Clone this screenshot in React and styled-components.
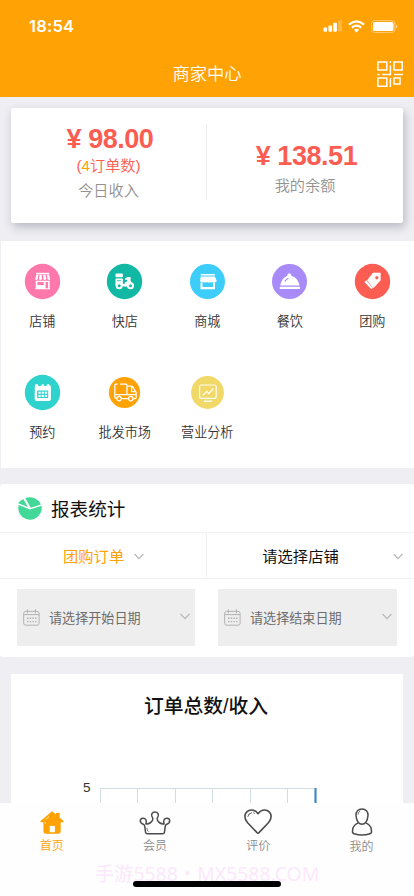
import React from "react";
import styled, { createGlobalStyle } from "styled-components";

const Global = createGlobalStyle`
  * { box-sizing: border-box; }
  body {
    margin: 0;
    background: #eeeef3;
    font-family: "Liberation Sans", "Noto Sans CJK SC", sans-serif;
    overflow: hidden;
  }
  svg { display: block; flex: none; }
`;

const Screen = styled.div`
  width: 414px;
  height: 896px;
  display: flex;
  flex-direction: column;
  background: #eeeef3;
  overflow: hidden;
`;

const Header = styled.header`
  height: 97px;
  flex: none;
  background: #ffa206;
  color: #fff;
`;

const StatusBar = styled.div`
  height: 52px;
  padding: 0 16px 0 29px;
  display: flex;
  align-items: center;
  justify-content: space-between;
`;

const Time = styled.span`
  font: 600 16.5px/20px Inter, sans-serif;
  letter-spacing: 0.2px;
`;

const StatusIcons = styled.div`
  display: flex;
  align-items: center;
  gap: 6px;
`;

const TitleBar = styled.div`
  height: 43px;
  display: grid;
  grid-template-columns: 1fr auto 1fr;
  align-items: center;
  padding: 0 11px;
  & > svg { grid-column: 3; justify-self: end; }
`;

const PageTitle = styled.h1`
  grid-column: 2;
  margin: 0;
  font-weight: 350;
  font-size: 17.3px;
  line-height: 24px;
`;

const Main = styled.main`
  flex: 1;
  min-height: 0;
  overflow: hidden;
`;

const IncomeCard = styled.section`
  height: 115px;
  margin: 11px 11px 0 11px;
  border-radius: 2px;
  background: #fff;
  box-shadow: 2px 4px 10px rgba(60, 60, 80, 0.3);
  display: grid;
  grid-template-columns: 195px 1px 1fr;
`;

const CardDivider = styled.div`
  height: 76px;
  margin-top: 16px;
  background: #ededf0;
`;

const Figure = styled.div`
  display: flex;
  flex-direction: column;
  align-items: center;
  padding-top: ${(p) => p.$top}px;
`;

const Amount = styled.div`
  display: flex;
  gap: 7px;
  padding-left: 3px;
  color: #fb5d52;
  font-size: 27px;
  font-weight: 700;
  line-height: 30px;
  letter-spacing: -0.45px;
`;

const OrderCount = styled.div`
  color: #fb5d52;
  font-size: 15.2px;
  font-weight: 350;
  line-height: 24px;
  b { color: #ffa206; font-weight: 400; }
`;

const FigureLabel = styled.div`
  margin-top: ${(p) => p.$gap}px;
  color: #929292;
  font-size: 15.2px;
  font-weight: 350;
  line-height: 24px;
`;

const Services = styled.section`
  height: 227px;
  margin: 18px 0 0 1px;
  background: #fff;
  display: grid;
  grid-template-columns: repeat(5, 82.5px);
  grid-template-rows: 111px 111px;
`;

const Service = styled.div`
  display: flex;
  flex-direction: column;
  align-items: center;
  padding-top: 22px;
`;

const ServiceLabel = styled.span`
  margin-top: 12px;
  color: #333;
  font-size: 13.1px;
  font-weight: 350;
  line-height: 20px;
`;

const Report = styled.section`
  height: 173px;
  margin-top: 16px;
  border-radius: 3px;
  background: #fff;
`;

const ReportHeading = styled.div`
  height: 48px;
  padding: 2px 0 0 18px;
  display: flex;
  align-items: center;
  gap: 9px;
  font-size: 18.6px;
  line-height: 26px;
  color: #111;
  & > span { padding-top: 2px; }
`;

const FilterRow = styled.div`
  height: 47px;
  display: grid;
  grid-template-columns: 207px 1fr;
  border: solid #f1f1f1;
  border-width: 1px 0;
`;

const OrderFilter = styled.div`
  display: flex;
  align-items: center;
  gap: 10px;
  padding-left: 63px;
  border-right: 1px solid #f0f0f0;
  color: #ffa206;
  font-size: 15.3px;
  & > span { padding-bottom: 2px; }
  & > svg { margin-top: 2px; }
`;

const ShopFilter = styled.div`
  display: grid;
  grid-template-columns: 1fr 10px;
  align-items: center;
  padding: 0 11px 0 1px;
  color: #111;
  font-size: 15.3px;
  text-align: center;
  & > span { padding-bottom: 2px; }
  & > svg { margin-top: 2px; }
`;

const DateRow = styled.div`
  display: grid;
  grid-template-columns: 178px 179px;
  gap: 23px;
  padding: 10px 17px 0;
`;

const DateField = styled.div`
  height: 57px;
  padding: 0 5px 0 6px;
  display: flex;
  align-items: center;
  background: #eee;
  color: #6c6c6c;
  font-size: 13.1px;
  line-height: 20px;
  & > span { flex: 1; margin-left: 9px; padding-top: 2px; }
  & > svg:last-child { margin-bottom: 2px; }
`;

const ChartCard = styled.section`
  height: 300px;
  margin: 17px 11px 0;
  background: #fff;
`;

const ChartTitle = styled.h2`
  margin: 0;
  padding: 18px 2px 0 0;
  height: 107px;
  color: #111;
  text-align: center;
  font-family: "Liberation Sans", "Noto Sans CJK SC", sans-serif;
  font-size: 19.8px;
  font-weight: 500;
  line-height: 28px;
`;

const ChartBody = styled.div`
  display: flex;
  padding-left: 72px;
  gap: 8px;
`;

const AxisLabel = styled.span`
  width: 8px;
  color: #333;
  font-size: 13.5px;
  line-height: 14px;
`;

const TabBar = styled.nav`
  height: 93px;
  flex: none;
  background: #fefefe;
  display: grid;
  grid-template-columns: repeat(4, 103.3px);
  grid-template-rows: 59px 34px;
`;

const Tab = styled.div`
  display: flex;
  flex-direction: column;
  align-items: center;
  padding-top: ${(p) => p.$top}px;
  color: ${(p) => (p.$active ? "#ffa206" : "#8c8c8c")};
  font-size: 12px;
  font-weight: 350;
  line-height: 18px;
`;

const TabLabel = styled.span`
  margin-top: 2px;
`;

const Footer = styled.div`
  grid-column: 1 / -1;
  display: flex;
  justify-content: center;
  position: relative;
  width: 414px;
`;

const Watermark = styled.span`
  color: #fbe9fb;
  font-family: "Noto Sans", "Noto Sans CJK SC", sans-serif;
  font-size: 19.4px;
  line-height: 23px;
  white-space: pre;
`;

const HomeIndicator = styled.div`
  position: absolute;
  left: 133px;
  top: 19px;
  width: 148px;
  height: 6px;
  border-radius: 3px;
  background: #000;
`;

const Signal = () => (
  <svg width="19" height="12" viewBox="0 0 19 12" fill="#fff">
    <rect x="0.5" y="7.5" width="3.6" height="4.2" rx="1" />
    <rect x="5.5" y="5.5" width="3.6" height="6.2" rx="1" />
    <rect x="10.3" y="2.7" width="3.6" height="9" rx="1" />
    <rect x="15.2" y="0.2" width="3.6" height="11.5" rx="1" opacity="0.25" />
  </svg>
);

const Wifi = () => (
  <svg width="17" height="13" viewBox="0 0 17 13" fill="none" stroke="#fff" strokeWidth="2.2">
    <path d="M0.9 4.6Q8.5-1.9 16.1 4.6" />
    <path d="M3.8 7.7Q8.5 3.6 13.2 7.7" />
    <path d="M8.5 12.4L5.9 9.8Q8.5 7.6 11.1 9.8Z" fill="#fff" stroke="none" />
  </svg>
);

const Battery = () => (
  <svg width="27" height="13" viewBox="0 0 27 13">
    <rect x="0.5" y="0.5" width="23.5" height="12" rx="3.2" fill="none" stroke="#fff" opacity="0.42" />
    <rect x="2" y="2" width="20.5" height="9" rx="1.6" fill="#fff" />
    <path d="M25 4.6q1.5 .5 1.5 1.9t-1.5 1.9z" fill="#fff" opacity="0.5" />
  </svg>
);

const QrIcon = () => (
  <svg width="26" height="26" viewBox="0 0 26 26" fill="none" stroke="#fff" strokeWidth="1.5">
    <path d="M.9 .9h8.9v8.2H.9zM17 .9h8.2v8.2H17zM.9 17.1h8.9v8.1H.9zM17 17.1h6v6h-6z" />
    <path d="M13.4 .1v2M13.4 4.4v9.1H5.2M.2 13.4h2.4M17 13.4h8.9M13.4 17v8.9" />
  </svg>
);

const Chevron = () => (
  <svg width="10" height="7" viewBox="0 0 10 7" fill="none" stroke="#b5b5b5" strokeWidth="1.1">
    <path d="M.6 1L5 5.6 9.4 1" />
  </svg>
);

const PieIcon = () => (
  <svg width="24" height="24" viewBox="0 0 24 24" fill="#42d898">
    <path d="M.7 8L12 12.6 23.5 8.8A11.7 11.7 0 1 1 .7 8z" />
    <path d="M7.2 1.1Q11 -.1 14.2 .5Q20.6 1.8 22.9 7.5L12.8 10.7z" />
    <path d="M5.3 1.9L9.9 10 .1 6.3Q1.8 3.7 5.3 1.9z" />
  </svg>
);

const CalendarIcon = () => (
  <svg width="17" height="17" viewBox="0 0 17 17" fill="none" stroke="#b2b2b2">
    <rect x=".7" y="2.4" width="15.4" height="13.8" rx="2" />
    <path d="M.7 5.6h15.4M4.4 .3v4M12.4 .3v4" />
    <path d="M4 9.3h9.6M4 12.6h9.6" strokeWidth="1.4" strokeDasharray="1.5 1.2" />
  </svg>
);

/* Every service glyph is drawn inside a 36px disc centred on 18,18. */
const glyphs = {
  store: (
    <g fill="#fff">
      <path d="M11.6 9.3h13.2v1.5H11.6z" />
      <path d="M11.8 11.2h2.1l-.7 4.6q-1.3 1.4-2.4 0zM15.1 11.2h2.3v4.6q-1.4 1.4-3 0zM18.8 11.2H21l.8 4.6q-1.4 1.4-3 0zM22.4 11.2h2.2l1.1 4.6q-1.4 1.4-2.6 0z" />
      <path fillRule="evenodd" d="M11.3 17.3h13.9v7.4h.4v1.1H10.8v-1.1h.5zM12.9 18.4v3h6.4v-3zM21.1 18.4v6.3h2.5v-6.3z" />
    </g>
  ),
  scooter: (
    <g>
      <g fill="#fff">
        <rect x="9" y="10.1" width="7.4" height="3.6" rx=".9" />
        <rect x="9" y="15.1" width="7.4" height="7.5" rx=".8" />
        <path d="M18.4 16.3l.2-1.6 2.5-1.3h3v4l1 1.3q2.4 1.1 2.5 4.2h-9.8q-.2-2 .7-4.2l2-.6v-1.8z" />
        <path d="M14 20.4h6v2.4h-6z" />
      </g>
      <path d="M10.4 17.2h4.2" stroke="#11b9a4" strokeWidth=".8" />
      <circle cx="12.7" cy="22.2" r="2.5" fill="#11b9a4" stroke="#fff" strokeWidth="2" />
      <circle cx="24" cy="22.2" r="2.5" fill="#11b9a4" stroke="#fff" strokeWidth="2" />
    </g>
  ),
  mall: (
    <g fill="#fff">
      <path d="M11.3 10.4h14v1.7h-14zM11.2 13h14.2l1.9 4.5q-.7 1.5-2.1 1.3-1.2.7-2.4-.4-1.3 1-2.4 0-1.2 1-2.4 0-1.2 1-2.4 0-1.2 1-2.4.2-1.6.5-2.6-1.1z" />
      <path d="M11 19v6.8h14.5V19h-2v4.4H13V19z" />
    </g>
  ),
  dish: (
    <g fill="#fff">
      <path d="M8.7 22.1q.5-3.3 2.4-6.2 1.8-2.6 4.8-3.6v-1.1q.2-1.4 1.9-1.5 1.8 0 2 1.5v1.1q4 1 5.9 4 1.8 3 2.3 5.8zM8.3 23.3h20.1v2.3H8.3z" />
      <path d="M13.6 17.6q1.1-1.8 2.9-2.6" fill="none" stroke="#a88af9" strokeWidth="1.1" strokeLinecap="round" />
    </g>
  ),
  tag: (
    <g fill="#fff">
      <path fillRule="evenodd" d="M18.6 9.5h7.2v7.3l-7 7.6-5.9-7.6zM21 12.9a1.9 1.9 0 1 0 2.7 0 1.9 1.9 0 0 0-2.7 0z" strokeLinejoin="round" stroke="#fff" strokeWidth=".6" />
      <path d="M11.8 16.7l-1.9 1.8 6.9 7.2 1.5-1.3z" />
    </g>
  ),
  calendar: (
    <g>
      <path fill="#fff" d="M10.3 11.8q.2-2.1 1.5-2.3l1.4.2q.2 1.8 1.3 1.8h2q.8-.3.8-1.8h1.8q.1 1.7 1 1.8h1.5q.9-.2 1.3-1.9 2 0 2.1 1.2.5 0 1.4 1v13q-.2 1.6-1.8 1.6H12q-1.6 0-1.8-1.6z" />
      <rect x="12.6" y="16.1" width="11.1" height="7.4" rx=".6" fill="#2fd3ce" />
      <g fill="#fff">
        {[13.9, 17.1, 20.3].map((x) => (
          <React.Fragment key={x}>
            <rect x={x} y="17.2" width="2.3" height="2" />
            <rect x={x} y="20.4" width="2.3" height="2" />
          </React.Fragment>
        ))}
      </g>
    </g>
  ),
  truck: (
    <g fill="none" stroke="#fff" strokeWidth="1.25" strokeLinejoin="round">
      <path d="M10.3 23.8H9.6q-1.3 0-1.3-1.4V10.4q0-.9 1-.9h1.8M13.6 9.5h5.9q.9 0 .9.9v1.1M14.9 24.1h6.6M26.6 24.1h2.1q.9 0 .9-1v-5L26.1 12q-.4-.5-1-.5h-4.7v8.6M8.3 20.1h21.1M25.1 12v5.1h4.4" />
      <circle cx="12.6" cy="24.1" r="2.2" />
      <circle cx="24.3" cy="24.1" r="2.2" />
    </g>
  ),
  chart: (
    <g fill="none" stroke="#fff" strokeWidth="1.2" opacity="0.9">
      <rect x="10.1" y="10.5" width="16.6" height="13.4" rx="2" />
      <path d="M13.3 20.7l4-3.8 1.9 2.3 4.7-5.2M14.5 26.8h8.1" strokeWidth="1.4" />
    </g>
  ),
};

const ServiceIcon = ({ color, radius, name }) => (
  <svg width="37" height="37" viewBox="-0.5 -0.5 37 37">
    <circle cx="18" cy="18" r={radius} fill={color} />
    {glyphs[name]}
  </svg>
);

const services = [
  { label: "店铺", name: "store", color: "#ff78ab", radius: 17.7 },
  { label: "快店", name: "scooter", color: "#11b9a4", radius: 17.7 },
  { label: "商城", name: "mall", color: "#3ccdfb", radius: 17.5 },
  { label: "餐饮", name: "dish", color: "#a88af9", radius: 17.5 },
  { label: "团购", name: "tag", color: "#fb5d52", radius: 17.7 },
  { label: "预约", name: "calendar", color: "#2fd3ce", radius: 17.7 },
  { label: "批发市场", name: "truck", color: "#ffa206", radius: 15.6 },
  { label: "营业分析", name: "chart", color: "#f1d969", radius: 16.4 },
];

const HomeIcon = () => (
  <svg width="24" height="24" viewBox="0 0 24 24">
    <path d="M12 .3L15.8 3.6V2.1h3.9v4.6L23.6 10v1.2H20.7V20.5q0 2.3-2.4 2.3H5.8q-2.4 0-2.4-2.3V11.2H.5V10z" fill="#ffa206" />
    <path d="M9.7 14.9h5.2v6.3H9.7z" fill="#fff" />
    <path d="M5.4 8.7L9 5.4M5.3 11v2.2" stroke="#ffdc9e" strokeWidth="1" fill="none" />
  </svg>
);

const CrownIcon = () => (
  <svg width="32" height="24" viewBox="0 0 32 24" fill="none" stroke="#4b4b4b" strokeWidth="1.5" strokeLinejoin="round">
    <path d="M8.4 22.8Q6.8 22.7 6.5 21.1L5.8 15.4Q5.5 13.9 4.2 13.2C.3 12.2.4 7.3 4 7.2C7.2 7.1 7.9 10.4 6.9 12.9Q10.8 13.8 13.5 9.4Q14.4 7.2 13.2 6C11.6 3.6 13.2.9 16 .9S20.4 3.6 18.8 6Q17.6 7.2 18.5 9.4Q21.2 13.8 25.1 12.9C24.1 10.4 24.8 7.1 28 7.2C31.6 7.3 31.7 12.2 27.8 13.2Q26.5 13.9 26.2 15.4L25.5 21.1Q25.2 22.7 23.6 22.8z" />
    <path d="M7.8 16.8l.5 2.1q.3 1.2 1.3 1.7" strokeWidth=".8" />
  </svg>
);

const HeartIcon = () => (
  <svg width="28" height="26" viewBox="0 0 28 26" fill="none" stroke="#4b4b4b" strokeWidth="1.6" strokeLinejoin="round">
    <path d="M14 4.7Q11.2 1 7.4 1C3.8 1 .9 4 .9 7.5Q.9 10.9 3.6 13.7L13 23.6Q14 24.6 15 23.6L24.4 13.7Q27.1 10.9 27.1 7.5C27.1 4 24.2 1 20.6 1Q16.8 1 14 4.7z" />
    <path d="M3.8 7.8q.4-3.5 4.1-4.1M9.4 3.8l1.5.7" strokeWidth=".9" />
  </svg>
);

const PersonIcon = () => (
  <svg width="22" height="28" viewBox="0 0 22 28" fill="none" stroke="#4b4b4b" strokeWidth="1.5">
    <path d="M11 .9C7.2.9 4.8 3.8 5 7.5Q5.3 12 7.3 14.5Q8.8 16.2 11 16.2T14.7 14.5Q16.7 12 17 7.5C17.2 3.8 14.8.9 11 .9z" />
    <path d="M7.2 14.9Q3.4 16.4 2.2 19.3Q1.4 21.6 1.5 24.2Q1.7 25.4 3.1 25.8Q11 28.4 18.9 25.8Q20.3 25.4 20.5 24.2Q20.6 21.6 19.8 19.3Q18.6 16.4 14.8 14.9" />
    <path d="M7 6.6q.1-2.6 2.2-3.4" strokeWidth=".8" />
  </svg>
);

const GridTop = () => (
  <svg width="219" height="200" viewBox="0 0 219 200" fill="none" stroke="#d2dcdf">
    <path d="M1 7.5h214M1.5 7v193M38.5 7v193M76.5 7v193M113.5 7v193M151.5 7v193M188.5 7v193" />
    <path d="M216.5 7v193" stroke="#4389bd" strokeWidth="2.2" />
  </svg>
);

export default function App() {
  return (
    <Screen>
      <Global />
      <Header>
        <StatusBar>
          <Time>18:54</Time>
          <StatusIcons>
            <Signal />
            <Wifi />
            <Battery />
          </StatusIcons>
        </StatusBar>
        <TitleBar>
          <PageTitle>商家中心</PageTitle>
          <QrIcon />
        </TitleBar>
      </Header>

      <Main>
        <IncomeCard>
          <Figure $top={16}>
            <Amount><span>¥</span><span>98.00</span></Amount>
            <OrderCount>(<b>4</b>订单数)</OrderCount>
            <FigureLabel $gap={1}>今日收入</FigureLabel>
          </Figure>
          <CardDivider />
          <Figure $top={33}>
            <Amount><span>¥</span><span>138.51</span></Amount>
            <FigureLabel $gap={3}>我的余额</FigureLabel>
          </Figure>
        </IncomeCard>

        <Services>
          {services.map((s) => (
            <Service key={s.name}>
              <ServiceIcon {...s} />
              <ServiceLabel>{s.label}</ServiceLabel>
            </Service>
          ))}
        </Services>

        <Report>
          <ReportHeading>
            <PieIcon />
            <span>报表统计</span>
          </ReportHeading>
          <FilterRow>
            <OrderFilter><span>团购订单</span><Chevron /></OrderFilter>
            <ShopFilter><span>请选择店铺</span><Chevron /></ShopFilter>
          </FilterRow>
          <DateRow>
            <DateField><CalendarIcon /><span>请选择开始日期</span><Chevron /></DateField>
            <DateField><CalendarIcon /><span>请选择结束日期</span><Chevron /></DateField>
          </DateRow>
        </Report>

        <ChartCard>
          <ChartTitle>订单总数/收入</ChartTitle>
          <ChartBody>
            <AxisLabel>5</AxisLabel>
            <GridTop />
          </ChartBody>
        </ChartCard>
      </Main>

      <TabBar>
        <Tab $active $top={8}><HomeIcon /><TabLabel>首页</TabLabel></Tab>
        <Tab $top={8}><CrownIcon /><TabLabel>会员</TabLabel></Tab>
        <Tab $top={6}><HeartIcon /><TabLabel>评价</TabLabel></Tab>
        <Tab $top={5}><PersonIcon /><TabLabel>我的</TabLabel></Tab>
        <Footer>
          <Watermark>手游5588・MX5588.COM</Watermark>
          <HomeIndicator />
        </Footer>
      </TabBar>
    </Screen>
  );
}
